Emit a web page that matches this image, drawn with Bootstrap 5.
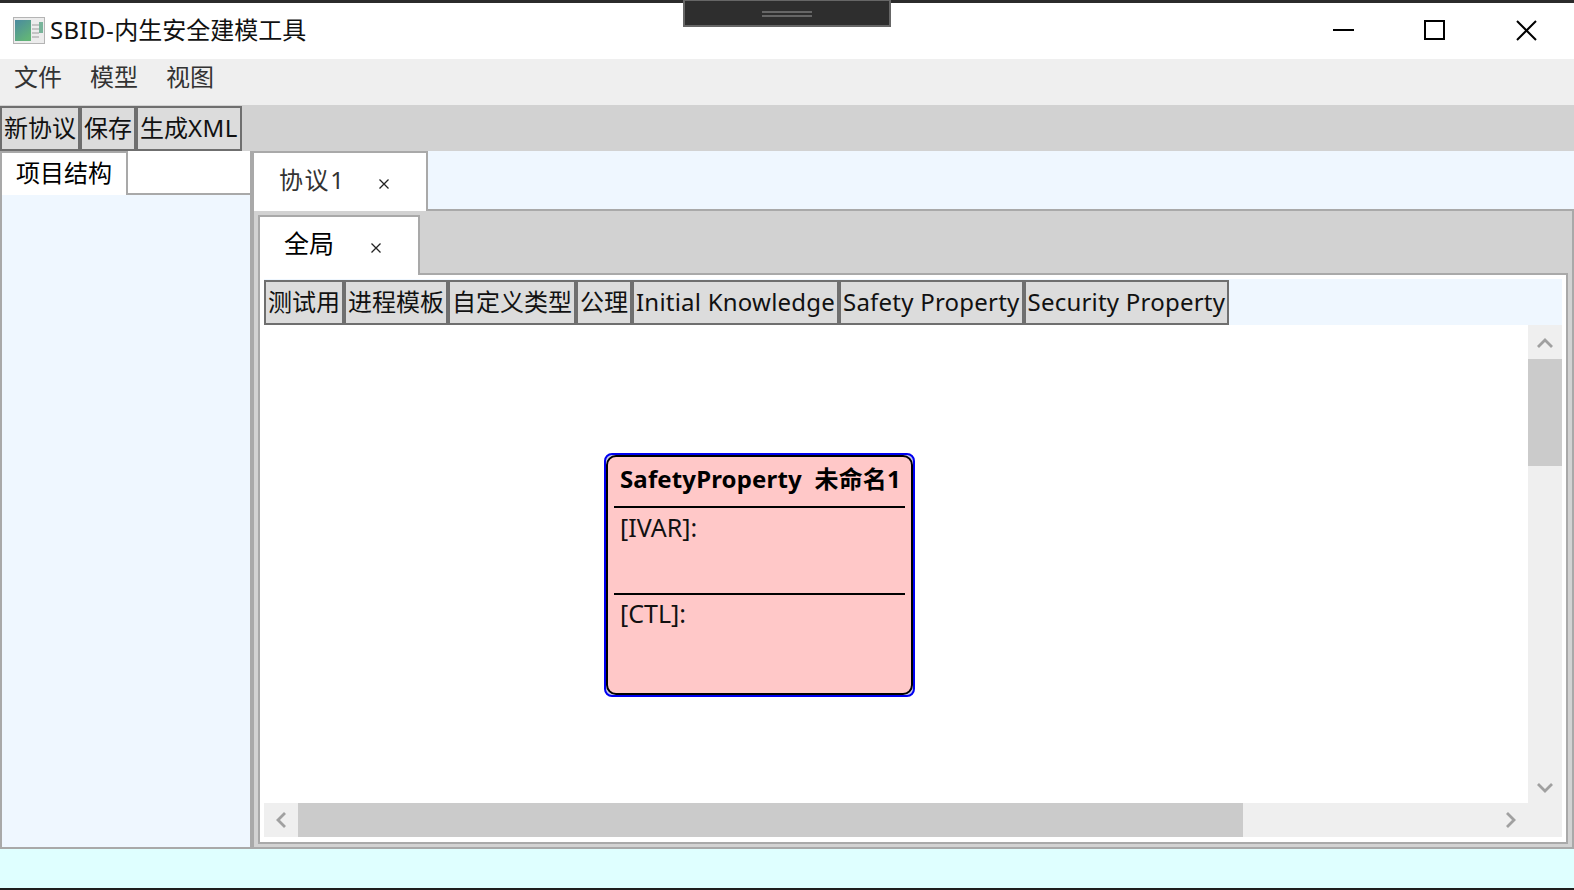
<!DOCTYPE html>
<html lang="zh"><head><meta charset="utf-8"><title>SBID</title>
<link href="https://cdn.jsdelivr.net/npm/bootstrap@5.3.0/dist/css/bootstrap.min.css" rel="stylesheet">
<style>
html,body{height:890px;overflow:hidden;margin:0}
body{font-family:"Noto Sans","Noto Sans CJK SC",sans-serif;font-size:24px;color:#000;line-height:1.2}
.app{height:890px;width:1574px}
.topedge{height:3px;background:#2b2b2b;flex:none}
.handle{position:absolute;left:683px;top:0;width:208px;height:27px;background:#2e2e2e;border:2px solid #666;border-top-width:1px}
.handle i{position:absolute;left:77px;width:50px;height:2px;background:#666}
.handle .h1{top:10px}.handle .h2{top:14px}
.titlebar{height:56px;flex:none;background:#fff;padding:0 0 2px 13px;color:#111}
.tlatin{letter-spacing:.4px;margin-left:1px}
.wicons{margin-left:auto}
.winspacer{width:24px;flex:none}
.menubar{height:46px;flex:none;background:#efefef;padding:0 0 10px 14px;gap:28px;color:#333}
.toolbar{height:46px;flex:none;background:#d2d2d2;padding:1px 0 0 0}
.cmd{background:#dcdcdc;border:2px solid #6f6f6f;padding:0 2px;height:45px;display:flex;align-items:center;white-space:nowrap;color:#111}
.wide{letter-spacing:.22px}
.xml{letter-spacing:.4px}
.mainarea{height:698px;flex:none}
.leftcol{width:252px;flex:none}
.lefttabs{height:44px;flex:none;background:#fff}
.ltab{width:128px;border:solid #a9a9a9;border-width:2px 2px 0 2px;padding:6px 0 0 14px;background:#fff}
.lfill{flex:1;border-bottom:2px solid #a9a9a9;border-right:2px solid #a9a9a9}
.lbody{flex:1;background:#eff7ff;border:solid #a9a9a9;border-width:0 2px 2px 2px}
.rightcol{flex:1;min-width:0}
.rtabs{height:60px;flex:none;background:#eff7ff}
.rtab{width:176px;background:#fff;border:solid #a9a9a9;border-width:2px 2px 0 2px;padding:0 0 4px 25px;color:#333}
.rtab span{letter-spacing:1.6px}
.rfill{flex:1;border-bottom:2px solid #a9a9a9}
.closex{position:absolute;width:12px;height:12px}
.outerpane{flex:1;background:#d2d2d2;border:solid #a9a9a9;border-width:0 2px 2px 2px;padding:4px 4px 3px 4px;min-height:0}
.itabs{height:60px;flex:none}
.itab{width:162px;background:#fff;border:solid #a9a9a9;border-width:2px 2px 0 2px;padding:0 0 6px 24px;font-size:25px}
.ifill{flex:1;border-bottom:2px solid #a9a9a9}
.innerpane{flex:1;min-height:0;background:#fff;border:solid #a9a9a9;border-width:0 2px 2px 2px;padding:4px 4px 5px 4px}
.tabbtns{height:46px;flex:none;background:#eff7ff;padding-top:1px}
.workgrid{flex:1;min-height:0}
.canvasarea{flex:1;position:relative;background:#fff;overflow:hidden}
.vsb{width:34px;flex:none;background:#efefef}
.vthumb{height:107px;background:#cbcbcb}
.sbcell{height:34px;flex:none}
.sbup{padding-top:2px}
.sbdown{padding-top:4px}
.hsb{height:34px;flex:none;background:#efefef}
.hcell{width:34px;flex:none}
.hthumb{width:945px;background:#cbcbcb}
.hend{width:92px;flex:none}
.nodebox{position:absolute;left:340px;top:128px;width:311px;height:244px;border:2px solid #0000f0;border-radius:8px;background:#c8c8f0}
.nodein{height:100%;border:2px solid #000;border-radius:10px;background:#ffc8c8;padding:0 6px}
.nodehead{height:51px;flex:none;border-bottom:2px solid #000;font-weight:700;padding:0 0 4px 6px;white-space:nowrap;letter-spacing:.14px}
.nodesec{flex:none;padding:3px 0 0 6px;color:#111;font-size:25px}
.nodesec.line{border-bottom:2px solid #000;height:87px;padding-top:4px}
.statusbar{height:39px;flex:none;background:#dfffff}
.bottomedge{height:2px;flex:none;background:#1e1e1e}
</style></head>
<body>
<div class="app d-flex flex-column position-relative">
  <div class="topedge"></div>
  <div class="handle"><i class="h1"></i><i class="h2"></i></div>
  <div class="titlebar d-flex align-items-center">
    <svg width="32" height="27" viewBox="0 0 32 27" class="me-1"><defs><linearGradient id="g" x1="0" y1="0" x2="0.6" y2="1"><stop offset="0" stop-color="#4a8aa0"/><stop offset="1" stop-color="#62b478"/></linearGradient></defs><rect x=".5" y=".5" width="31" height="26" fill="#ececec" stroke="#b4b4b4"/><rect x="2" y="3" width="16" height="21" fill="url(#g)"/><rect x="19" y="7" width="7" height="2" fill="#c4c4c4"/><rect x="19" y="11" width="7" height="2" fill="#c4c4c4"/><rect x="19" y="15" width="7" height="2" fill="#c4c4c4"/><rect x="19" y="19" width="7" height="2" fill="#c4c4c4"/><rect x="26" y="5" width="4" height="11" fill="#78b49a"/></svg>
    <span><span class="tlatin">SBID-</span>内生安全建模工具</span>
    <svg class="wicons" width="217" height="24" viewBox="0 0 217 24"><path d="M0 12h21" stroke="#000" stroke-width="2"/><rect x="92" y="3" width="19" height="18" fill="none" stroke="#000" stroke-width="2"/><path d="M184 3l19 19M203 3l-19 19" stroke="#000" stroke-width="2" fill="none"/></svg>
    <span class="winspacer"></span>
  </div>
  <div class="menubar d-flex align-items-center"><span>文件</span><span>模型</span><span>视图</span></div>
  <div class="toolbar d-flex"><div class="cmd">新协议</div><div class="cmd">保存</div><div class="cmd"><span>生成<span class="xml">XML</span></span></div></div>
  <div class="mainarea d-flex">
    <div class="leftcol d-flex flex-column">
      <div class="lefttabs d-flex"><div class="ltab">项目结构</div><div class="lfill"></div></div>
      <div class="lbody"></div>
    </div>
    <div class="rightcol d-flex flex-column">
      <div class="rtabs d-flex">
        <div class="rtab d-flex align-items-center position-relative"><span>协议1</span><svg class="closex" style="left:124px;top:25px" viewBox="0 0 12 12"><path d="M1.5 1.5l9 9M10.5 1.5l-9 9" stroke="#222" stroke-width="1.3"/></svg></div>
        <div class="rfill"></div>
      </div>
      <div class="outerpane d-flex flex-column">
        <div class="itabs d-flex">
          <div class="itab d-flex align-items-center position-relative"><span>全局</span><svg class="closex" style="left:110px;top:25px" viewBox="0 0 12 12"><path d="M1.5 1.5l9 9M10.5 1.5l-9 9" stroke="#222" stroke-width="1.3"/></svg></div>
          <div class="ifill"></div>
        </div>
        <div class="innerpane d-flex flex-column">
          <div class="tabbtns d-flex"><div class="cmd">测试用</div><div class="cmd">进程模板</div><div class="cmd">自定义类型</div><div class="cmd">公理</div><div class="cmd wide">Initial Knowledge</div><div class="cmd wide">Safety Property</div><div class="cmd wide">Security Property</div></div>
          <div class="workgrid d-flex">
            <div class="canvasarea">
              <div class="nodebox"><div class="nodein d-flex flex-column">
                <div class="nodehead d-flex align-items-center"><span>SafetyProperty&nbsp; 未命名1</span></div>
                <div class="nodesec line">[IVAR]:</div>
                <div class="nodesec">[CTL]:</div>
              </div></div>
            </div>
            <div class="vsb d-flex flex-column">
              <div class="sbcell sbup d-flex align-items-center justify-content-center"><svg width="16" height="10" viewBox="0 0 16 10"><path d="M1 9l7-7 7 7" fill="none" stroke="#a0a0a0" stroke-width="2.8"/></svg></div>
              <div class="vthumb"></div>
              <div class="flex-grow-1"></div>
              <div class="sbcell sbdown d-flex align-items-center justify-content-center"><svg width="16" height="10" viewBox="0 0 16 10"><path d="M1 1l7 7 7-7" fill="none" stroke="#a0a0a0" stroke-width="2.8"/></svg></div>
            </div>
          </div>
          <div class="hsb d-flex">
            <div class="hcell d-flex align-items-center justify-content-center"><svg width="10" height="16" viewBox="0 0 10 16"><path d="M9 1L2 8l7 7" fill="none" stroke="#a0a0a0" stroke-width="2.8"/></svg></div>
            <div class="hthumb"></div>
            <div class="flex-grow-1"></div>
            <div class="hend d-flex align-items-center"><svg width="92" height="16" viewBox="0 0 92 16"><path d="M37 1l7 7-7 7" fill="none" stroke="#a0a0a0" stroke-width="2.8"/></svg></div>
          </div>
        </div>
      </div>
    </div>
  </div>
  <div class="statusbar"></div>
  <div class="bottomedge"></div>
</div>
<script src="https://cdn.jsdelivr.net/npm/bootstrap@5.3.0/dist/js/bootstrap.bundle.min.js"></script>
</body></html>
